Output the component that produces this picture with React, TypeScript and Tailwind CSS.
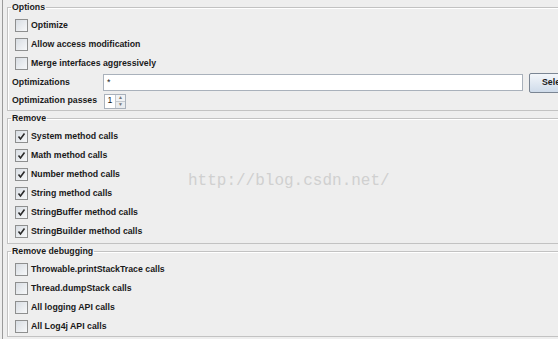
import type { ReactNode } from "react";

function CheckBox({ checked }: { checked?: boolean }) {
  return (
    <span className="relative flex h-[13px] w-[13px] shrink-0 items-center justify-center border border-[#8e8f8f] bg-gradient-to-br from-[#d8dde3] to-[#f7f8f9]">
      {checked ? (
        <svg width="9" height="9" viewBox="0 0 9 9" aria-hidden="true">
          <path d="M1.5 4.5 L3.5 7 L7.5 1.5" fill="none" stroke="#2a2a2a" strokeWidth="1.6" />
        </svg>
      ) : null}
    </span>
  );
}

function CheckRow({ label, checked }: { label: string; checked?: boolean }) {
  return (
    <div className="flex h-[19px] items-center gap-[3px] pl-[4px]">
      <CheckBox checked={checked} />
      <span>{label}</span>
    </div>
  );
}

function Group({ title, children, extra = "" }: { title: string; children: ReactNode; extra?: string }) {
  return (
    <fieldset className={`ml-[4px] w-[620px] border border-[#c2c2c2] pl-[3px] shadow-[inset_1px_1px_0_#ffffff] ${extra}`}>
      <legend className="px-[1px] leading-[12px]">{title}</legend>
      <div className="pt-[3px]">{children}</div>
    </fieldset>
  );
}

export default function App() {
  return (
    <div className="relative h-[339px] w-[558px] overflow-hidden bg-[#eeeeee] font-['Liberation_Sans',Arial,sans-serif] text-[8.75px] font-bold text-[#1a1a1a]">
      <div className="ml-[2px] flex h-full flex-col border-l border-[#9a9a9a] pt-[1px]">
        <Group title="Options">
          <CheckRow label="Optimize" />
          <CheckRow label="Allow access modification" />
          <CheckRow label="Merge interfaces aggressively" />
          <div className="flex h-[19px] items-center pl-[1px]">
            <span className="w-[91px]">Optimizations</span>
            <div className="flex h-[17px] w-[420px] items-center border border-[#a9b1bb] bg-white pl-[3px] font-normal">*</div>
            <button className="ml-[6px] h-[20px] w-[60px] rounded-[2px] border border-[#7a8593] bg-gradient-to-b from-[#f3f6fa] to-[#cfdbea] pl-[12px] text-left">
              Select...
            </button>
          </div>
          <div className="flex h-[18px] items-center pl-[1px]">
            <span className="w-[92px]">Optimization passes</span>
            <div className="flex h-[15px] items-stretch border border-[#a9b1bb] bg-white">
              <span className="flex w-[10px] items-center justify-center font-normal">1</span>
              <div className="flex w-[10px] flex-col border-l border-[#c4c9cf]">
                <span className="flex flex-1 items-center justify-center border-b border-[#c4c9cf] bg-[#f1f3f5] text-[5px] leading-none text-[#777]">▲</span>
                <span className="flex flex-1 items-center justify-center bg-[#e9ecef] text-[5px] leading-none text-[#777]">▼</span>
              </div>
            </div>
          </div>
        </Group>
        <div className="h-[1px]" />
        <Group title="Remove" extra="pb-[2px]">
          <CheckRow label="System method calls" checked />
          <CheckRow label="Math method calls" checked />
          <CheckRow label="Number method calls" checked />
          <CheckRow label="String method calls" checked />
          <CheckRow label="StringBuffer method calls" checked />
          <CheckRow label="StringBuilder method calls" checked />
        </Group>
        <div className="h-[1px]" />
        <Group title="Remove debugging">
          <CheckRow label="Throwable.printStackTrace calls" />
          <CheckRow label="Thread.dumpStack calls" />
          <CheckRow label="All logging API calls" />
          <CheckRow label="All Log4j API calls" />
        </Group>
      </div>
      <div className="pointer-events-none absolute left-[188px] top-[171px] font-['Liberation_Mono',monospace] text-[16px] font-normal leading-[20px] text-[#d0d0d0]">
        http://blog.csdn.net/
      </div>
    </div>
  );
}
